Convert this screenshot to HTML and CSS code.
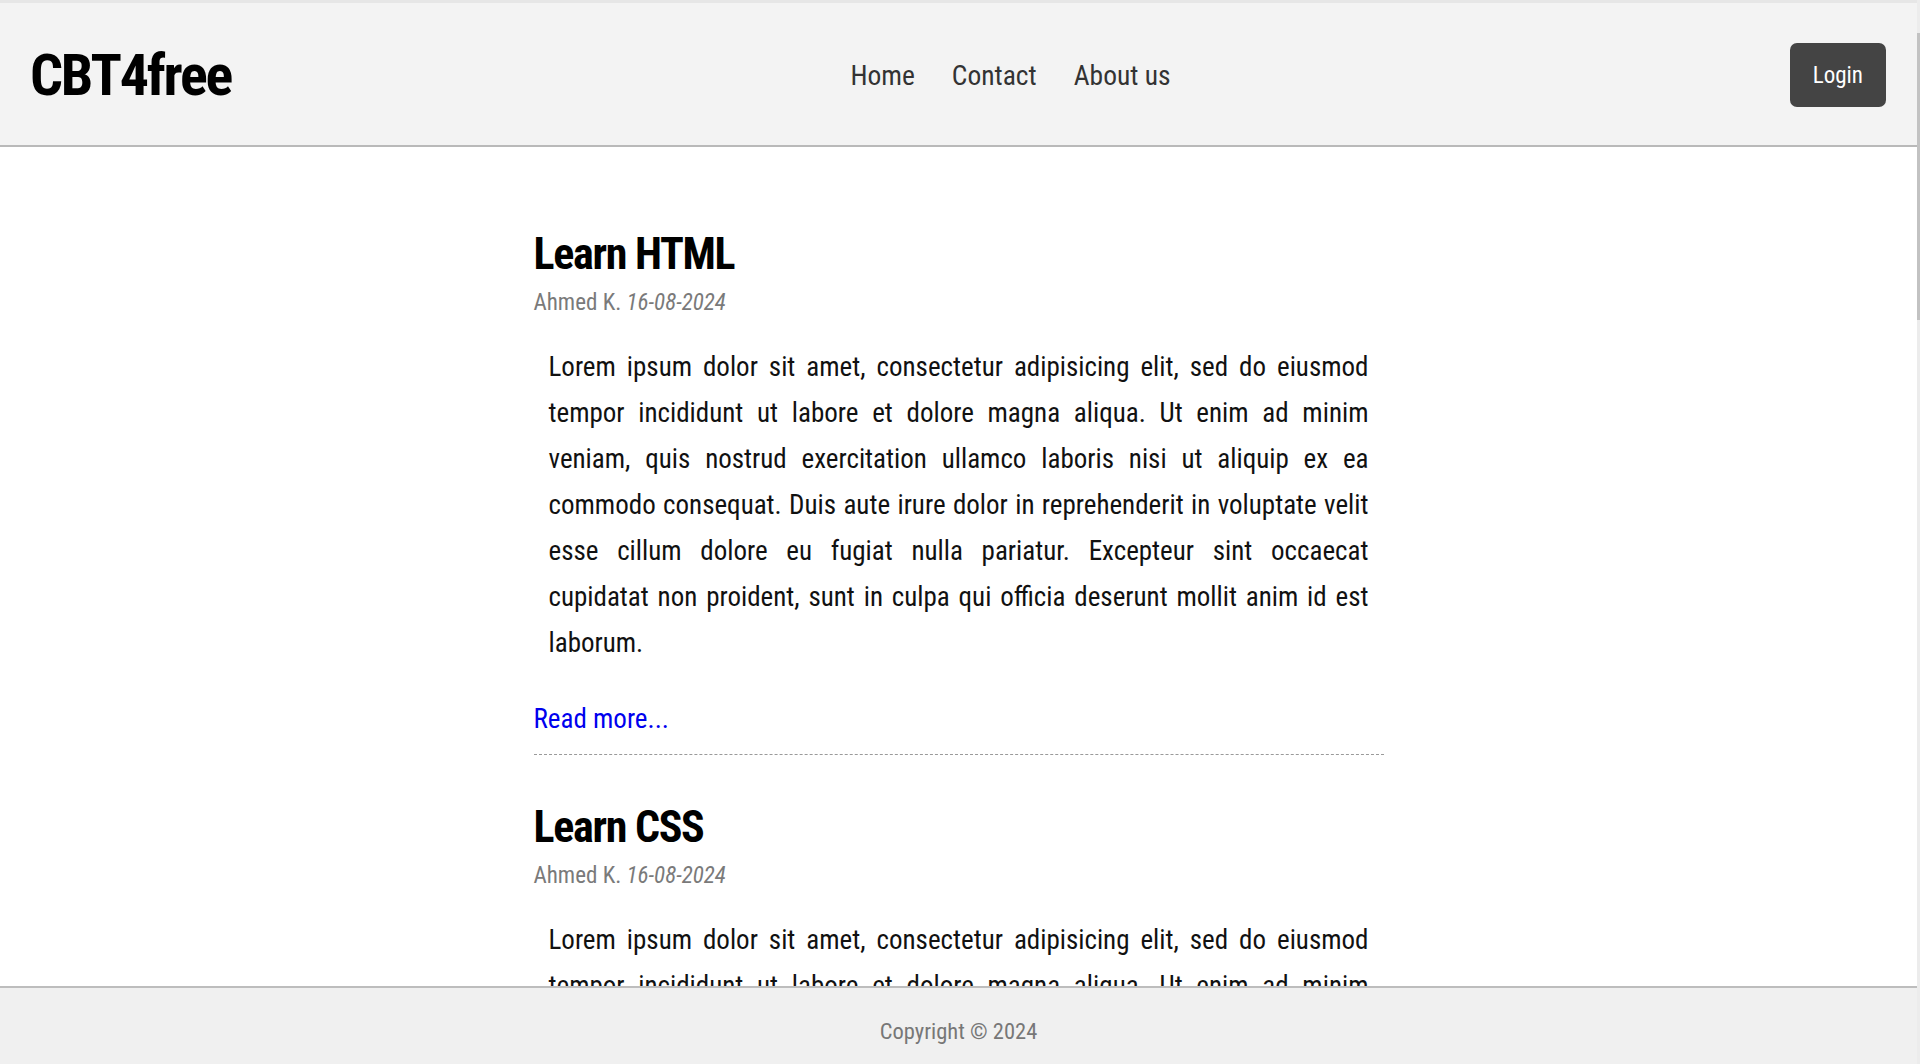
FILE: index.html
```
<!DOCTYPE html>
<html lang="en">
<head>
<meta charset="utf-8">
<title>CBT4free</title>
<link rel="stylesheet" href="styles.css">
</head>
<body>
<div class="screen">
  <div class="page">
    <header class="header">
      <div class="logo">CBT4free</div>
      <nav class="nav">
        <a href="#" class="nav-link">Home</a>
        <a href="#" class="nav-link">Contact</a>
        <a href="#" class="nav-link">About us</a>
      </nav>
      <button class="login">Login</button>
    </header>

    <main class="main">
      <article class="post">
        <h2 class="post-title">Learn HTML</h2>
        <div class="post-meta">Ahmed K. <em>16-08-2024</em></div>
        <p class="post-body">Lorem ipsum dolor sit amet, consectetur adipisicing elit, sed do eiusmod tempor incididunt ut labore et dolore magna aliqua. Ut enim ad minim veniam, quis nostrud exercitation ullamco laboris nisi ut aliquip ex ea commodo consequat. Duis aute irure dolor in reprehenderit in voluptate velit esse cillum dolore eu fugiat nulla pariatur. Excepteur sint occaecat<br>cupidatat non proident, sunt in culpa qui officia deserunt mollit anim id est laborum.</p>
        <a href="#" class="read-more">Read more...</a>
      </article>
      <article class="post">
        <h2 class="post-title">Learn CSS</h2>
        <div class="post-meta">Ahmed K. <em>16-08-2024</em></div>
        <p class="post-body">Lorem ipsum dolor sit amet, consectetur adipisicing elit, sed do eiusmod tempor incididunt ut labore et dolore magna aliqua. Ut enim ad minim veniam, quis nostrud exercitation ullamco laboris nisi ut aliquip ex ea commodo consequat. Duis aute irure dolor in reprehenderit in voluptate velit esse cillum dolore eu fugiat nulla pariatur. Excepteur sint occaecat<br>cupidatat non proident, sunt in culpa qui officia deserunt mollit anim id est laborum.</p>
        <a href="#" class="read-more">Read more...</a>
      </article>
    </main>

    <footer class="footer">Copyright © 2024</footer>
  </div>
  <div class="scrollbar"><div class="thumb"></div></div>
</div>
</body>
</html>
```
FILE: styles.css
```
* { box-sizing: border-box; }

html, body {
  margin: 0;
  padding: 0;
  height: 100%;
}

body {
  font-family: "Roboto Condensed", Roboto, "Liberation Sans", sans-serif;
  color: #000;
  background: #fff;
}

.screen {
  display: flex;
  height: 100vh;
  overflow: hidden;
}

.page {
  flex: 1;
  position: relative;
  overflow: hidden;
}

/* header */
.header {
  height: 147px;
  display: flex;
  align-items: center;
  justify-content: space-between;
  padding: 2px 31px 0 30px;
  background: #f3f3f3;
  border-top: 3px solid #e6e6e6;
  border-bottom: 2px solid #b9b9b9;
}

.logo {
  font-size: 58px;
  font-weight: 700;
  letter-spacing: -2.2px;
  line-height: 1;
  color: #000;
}

.nav {
  display: flex;
  gap: 37px;
}

.nav-link {
  font-size: 27.5px;
  color: #333;
  text-decoration: none;
  line-height: 1.2;
}

.login {
  height: 64px;
  padding: 0 23px;
  border: 0;
  border-radius: 7px;
  background: #444;
  color: #fff;
  font-family: inherit;
  font-size: 23px;
}

/* content */
.main {
  width: 850px;
  margin: 0 auto;
  padding-top: 81px;
}

.post {
  padding-bottom: 18px;
  border-bottom: 1px dashed #9a9a9a;
  margin-bottom: 46px;
}

.post-title {
  margin: 0;
  font-size: 44px;
  line-height: 52px;
  font-weight: 700;
  letter-spacing: -1.3px;
}

.post-meta {
  margin-top: 10px;
  font-size: 23px;
  line-height: 26px;
  color: #7a7a7a;
}

.post-body {
  margin: 28px 0 0;
  padding: 0 15px;
  font-size: 27px;
  line-height: 46px;
  text-align: justify;
  text-align-last: justify;
  color: #111;
}

.read-more {
  display: block;
  margin-top: 36px;
  font-size: 27px;
  line-height: 34px;
  color: #0000ee;
  text-decoration: none;
}

/* footer */
.footer {
  position: absolute;
  left: 0;
  right: 0;
  bottom: 0;
  height: 78px;
  padding-top: 30px;
  text-align: center;
  font-size: 22.5px;
  line-height: 26px;
  color: #777;
  background: #f0f0f0;
  border-top: 2px solid #bdbdbd;
}

/* scrollbar */
.scrollbar {
  width: 3px;
  background: #ececec;
  padding-top: 33px;
}

.thumb {
  height: 287px;
  background: #c2c2c2;
}
```
